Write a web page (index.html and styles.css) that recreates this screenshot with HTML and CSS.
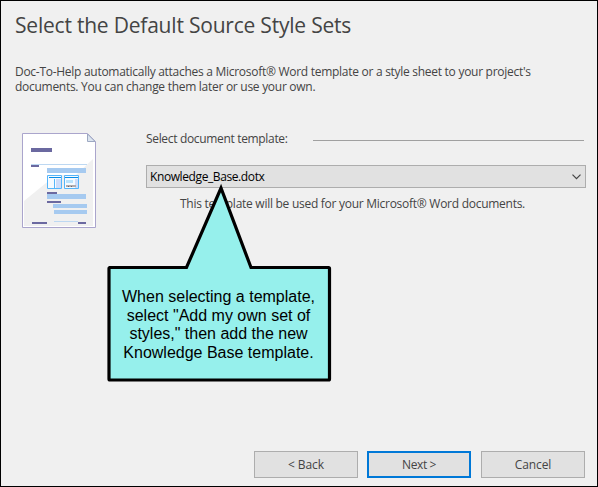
FILE: index.html
```html
<!DOCTYPE html>
<html lang="en">
<head>
<meta charset="utf-8">
<title>Select the Default Source Style Sets</title>
<link rel="stylesheet" href="styles.css">
</head>
<body>
<main class="wizard">
  <h1 class="title">Select the Default Source Style Sets</h1>
  <p class="intro">Doc-To-Help automatically attaches a Microsoft® Word template or a style sheet to your project's<br>documents. You can change them later or use your own.</p>
  <section class="content">
    <svg class="doc-icon" width="76" height="97" viewBox="0 0 76 97">
      <path d="M.5.5H65L73.500 9V94.500H.5Z" fill="#fff"/>
      <path d="M71 26V93H2V68L29 46L32 42H54Z" fill="#f0f0f0"/>
      <path d="M.5.5H65.500L73.500 8.500V94.500H.5Z" fill="none" stroke="#aaa5cc"/>
      <path d="M65.500 1V8.500H73Z" fill="#dce5ef" stroke="#9da8c2"/>
      <path d="M9 15h21v4H9z" fill="#6b69a0"/>
      <path d="M9 31h56v1H9zM32 88h24v1H32z" fill="#bdd8f2"/>
      <path d="M9 32h8v2H9zM25 59h10v2H25zM25 68h14v2H25zM10 89h15v2H10zM56 89h8v2h-8z" fill="#6b69a0"/>
      <path d="M25 35h39v5H25zM25 61h39v5H25zM31 71h34v4H31zM32 77h33v4H32z" fill="#a6caf0"/>
      <path d="M25.500 42.500h14v13h-14zM42.500 42.500h14v13h-14z" fill="#f5faff" stroke="#55b5fa"/>
      <path d="M27 44h12v1H27zM43 44h13v1H43z" fill="#078de8"/>
      <path d="M32 46h1v9h-1z" fill="#55b5fa"/>
      <path d="M34 46h5v9h-5zM53 46h3v9h-3z" fill="#cddcfa"/>
      <path d="M44 47h7v3h-7z" fill="#b9e2fc"/>
      <path d="M44 52h10v2H44z" fill="#b1abae"/>
      <path d="M46 53h1v1h-1zM49 53h1v1h-1z" fill="#6c686c"/>
    </svg>
    <div class="fields">
      <div class="legend"><span class="legend-text">Select document template:</span><span class="rule"></span></div>
      <div class="select"><span class="select-text">Knowledge_Base.dotx</span>
        <svg width="9" height="6" viewBox="0 0 9 6"><path d="M.5.7L4.500 4.700L8.500.7" fill="none" stroke="#444" stroke-width="1.200"/></svg>
      </div>
      <p class="note">This template will be used for your Microsoft® Word documents.</p>
    </div>
  </section>
  <footer class="actions">
    <button class="btn">&lt; Back</button>
    <button class="btn btn-primary">Next &gt;</button>
    <button class="btn btn-cancel">Cancel</button>
  </footer>
  <aside class="callout">
    <svg class="callout-shape" width="226" height="200" viewBox="0 0 226 200"><path d="M3 84.500H80.500L115 5L145 84.500H222.500Q223.500 84.500 223.500 85.500V196Q223.500 197 222.500 197H4Q3 197 3 196V85.500Q3 84.500 4 84.500Z" fill="#96f0ec" stroke="#000" stroke-width="3.200" stroke-linejoin="miter"/></svg>
    <p class="callout-text">When selecting a template,<br>select "Add my own set of<br>styles," then add the new<br>Knowledge Base template.</p>
  </aside>
</main>
</body>
</html>
```
FILE: styles.css
```css
* { box-sizing: border-box; }
body { margin: 0; }
.wizard {
  position: relative;
  display: flex;
  flex-direction: column;
  width: 598px;
  height: 487px;
  border: 1px solid #000;
  background: #f0f0f0;
  color: #444;
  font: 12px/15px "Open Sans", "Noto Sans", sans-serif;
  white-space: nowrap;
  overflow: hidden;
}
.title {
  margin: 9px 0 0 14px;
  font-size: 21px;
  line-height: 30px;
  font-weight: 400;
  letter-spacing: -0.21px;
}
.intro { margin: 24px 0 0 14px; letter-spacing: -0.28px; }
.content { display: flex; margin: 36px 11px 0 21px; }
.doc-icon { flex: none; margin-top: 3px; }
.fields { flex: 1; margin-left: 48px; }
.legend { display: flex; align-items: center; height: 16px; }
.rule { flex: 1; height: 1px; margin: 5px 2px 0 25px; background: #a0a0a0; }
.legend-text { width: 142px; letter-spacing: -0.33px; }
.select {
  display: flex;
  align-items: center;
  justify-content: space-between;
  height: 23px;
  margin-top: 19px;
  padding: 0 4px 0 3px;
  border: 1px solid #adadad;
  background: #e1e1e1;
  color: #000;
}
.select-text { letter-spacing: -0.4px; }
.note { margin: 8px 0 0 34px; letter-spacing: -0.27px; }
.actions { display: flex; margin: auto 12px 8px; justify-content: flex-end; }
.btn {
  width: 104px;
  height: 27px;
  padding: 0;
  border: 1px solid #adadad;
  background: #e1e1e1;
  color: #444;
  font: inherit;
  letter-spacing: -0.1px;
}
.btn-primary { margin-left: 9px; border: 2px solid #0078d7; letter-spacing: -0.4px; }
.btn-cancel { margin-left: 10px; }
.callout { position: absolute; left: 105px; top: 182px; width: 226px; height: 200px; }
.callout-shape { display: block; }
.callout-text {
  position: absolute;
  left: 0;
  right: 1px;
  top: 105px;
  margin: 0;
  color: #000;
  font: 16px/18.500px "Liberation Sans", Arial, sans-serif;
  text-align: center;
}
```
